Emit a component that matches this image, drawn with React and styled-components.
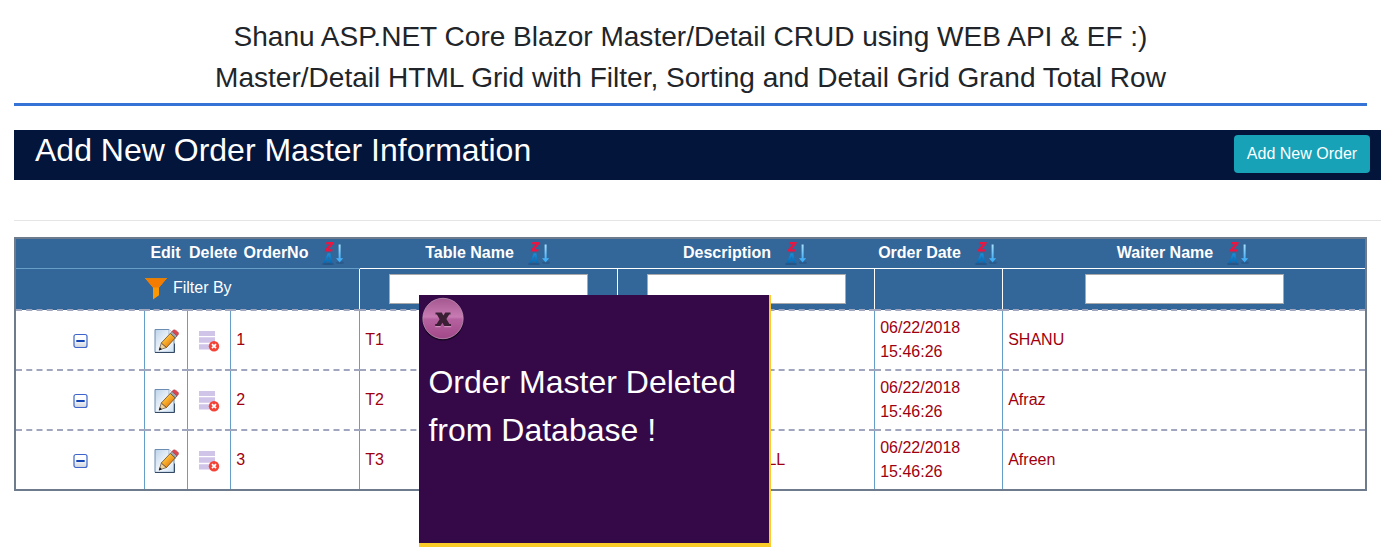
import React from 'react';
import styled, { createGlobalStyle } from 'styled-components';

const GlobalStyle = createGlobalStyle`
  *, *::before, *::after { box-sizing: border-box; }
  body {
    margin: 0;
    background: #fff;
    color: #212529;
    font: 16px/24px "Liberation Sans", Arial, sans-serif;
  }
`;

const Page = styled.main`
  position: relative;
  height: 553px;
  padding: 16px 10px 0 14px;
  overflow: hidden;
`;

const PageTitle = styled.h1`
  width: 1353px;
  height: 90px;
  margin: 0 0 24px;
  border-bottom: 3px solid #3574d6;
  font-size: 28.06px;
  line-height: 41px;
  font-weight: 400;
  text-align: center;
`;

const TitleBar = styled.header`
  display: flex;
  justify-content: space-between;
  align-items: flex-start;
  height: 50px;
  padding: 5px 11px 0 21px;
  background: #03153b;
`;

const BarTitle = styled.h2`
  margin: -4px 0 0;
  color: #fff;
  font-size: 32px;
  line-height: 38px;
  font-weight: 400;
`;

const AddButton = styled.button`
  width: 136px;
  height: 38px;
  padding: 0;
  border: 0;
  border-radius: 4px;
  background: #17a2b8;
  color: #fff;
  font: inherit;
`;

const Divider = styled.hr`
  height: 1px;
  margin: 40px 0 16px;
  border: 0;
  background: #e5e5e5;
`;

const Grid = styled.table`
  width: 1353px;
  table-layout: fixed;
  border-collapse: collapse;
  border: 2px solid #6d7b8d;
  color: #9f000f;
`;

const Col = styled.col`
  width: ${(p) => p.$w}px;
`;

const HeadCell = styled.th`
  height: 30px;
  padding: 0 0 0 ${(p) => (p.$start ? '2px' : 0)};
  border-bottom: 1px solid ${(p) => (p.$light ? '#fff' : '#659ec7')};
  background: #336699;
  color: #fff;
  white-space: nowrap;
  text-align: ${(p) => (p.$start ? 'left' : 'center')};
`;

const HeadLabel = styled.div`
  display: flex;
  justify-content: center;
  align-items: center;
  gap: 14px;
  height: 24px;
  padding-right: 1px;
`;

const FilterCell = styled.td`
  height: 42px;
  padding: 0 0 0 1px;
  border-left: 1px solid #fff;
  border-bottom: 2px dashed #a1a6bf;
  background: #336699;
  color: #fff;
`;

const FilterLabel = styled.div`
  display: flex;
  justify-content: center;
  align-items: center;
  gap: 6px;
  height: 38px;
  padding: 0 0 1px 1px;
`;

const FilterInput = styled.input`
  display: block;
  width: 199px;
  height: 30px;
  margin: 0 auto;
  border: 1px solid #a9a9a9;
  background: #fff;
  font: inherit;
`;

const Cell = styled.td`
  height: 60px;
  padding: ${(p) => (p.$icon ? '1px 0 0 1px' : '0 5px 0 5.7px')};
  border-left: 1px solid #659ec7;
  border-bottom: 2px dashed #a1a6bf;
  text-align: ${(p) => (p.$icon ? 'center' : 'left')};
  svg { display: block; margin: 0 auto; }
`;

const Description = styled.div`
  width: 162px;
  text-align: right;
`;

const Popup = styled.aside`
  position: absolute;
  left: 419px;
  top: 295px;
  width: 352px;
  height: 252px;
  padding: 2px 0 0 2px;
  border-right: 2px solid #fbcb27;
  border-bottom: 4px solid #fbcb27;
  background: #350947;
`;

const CloseButton = styled.button`
  display: block;
  width: 44px;
  height: 44px;
  padding: 0;
  border: 0;
  background: none;
`;

const Message = styled.p`
  margin: 17px 0 0 7.4px;
  color: #fff;
  font-size: 32px;
  line-height: 48px;
`;

const SortIcon = () => (
  <svg width="22" height="24" viewBox="0 0 22 24">
    <defs>
      <linearGradient id="arrow" x1="0" y1="0" x2="0" y2="1">
        <stop offset="0" stopColor="#a8e1ff" />
        <stop offset="1" stopColor="#2ea5f5" />
      </linearGradient>
      <linearGradient id="blueA" x1="0" y1="0" x2="0" y2="1">
        <stop offset="0" stopColor="#1d8ed8" />
        <stop offset="1" stopColor="#0269b4" />
      </linearGradient>
    </defs>
    <ellipse cx="6" cy="23" rx="6" ry="1.3" fill="#1c4574" opacity=".5" />
    <ellipse cx="18" cy="21.8" rx="4" ry="1.2" fill="#1c4574" opacity=".35" />
    <path d="M4.4 1h7.3l-.4 2-4.7 5.2h4l-.4 2.3H2.7l.5-2.2 4.7-5.1H4z" fill="#ea1540" />
    <path d="M5.7 12.3h2.6l2.2 10H8.1l-.4-2H4.6l-1 2H1.3zm1.2 2.9-1.5 3.4h2z" fill="url(#blueA)" />
    <path d="M16.6 3.5h2v13.8h2.6l-3.6 4.2-3.6-4.2h2.6z" fill="url(#arrow)" />
  </svg>
);

const FunnelIcon = () => (
  <svg width="22" height="23" viewBox="0 0 22 23">
    <path d="M0 1h22l-8 9.4v7.9l-6 4.2V10.4z" fill="#ff9800" />
    <path d="M0 1h22l-8 9.4H8z" fill="#f57c00" />
    <path d="M0 1h22l-1 1.3H1z" fill="#dc820c" />
  </svg>
);

const CollapseIcon = () => (
  <svg width="15" height="16" viewBox="0 0 15 16">
    <defs>
      <linearGradient id="box" x1="0" y1="0" x2="0" y2="1">
        <stop offset=".35" stopColor="#fff" />
        <stop offset="1" stopColor="#ccd2dc" />
      </linearGradient>
    </defs>
    <rect x="1" y="1.5" width="13" height="13" rx="2" fill="url(#box)" stroke="#3e64cb" strokeWidth="1.2" />
    <path d="M3.3 8h8.4" stroke="#1546b8" strokeWidth="2" />
  </svg>
);

const EditIcon = () => (
  <svg width="25" height="26" viewBox="0 0 25 26">
    <defs>
      <linearGradient id="sheet" x1="0" y1="0" x2="1" y2="1">
        <stop offset="0" stopColor="#bdd3ea" />
        <stop offset=".6" stopColor="#f5f9fd" />
        <stop offset="1" stopColor="#c9dff1" />
      </linearGradient>
      <linearGradient id="wood" x1="0" y1="0" x2="1" y2="1">
        <stop offset=".3" stopColor="#ffc23a" />
        <stop offset=".75" stopColor="#e77f0c" />
      </linearGradient>
    </defs>
    <path d="M1 1.5h14l5 5v17.8H1z" fill="url(#sheet)" stroke="#6d8cb2" />
    <path d="M15 1.5v5h5" fill="#fff" stroke="#9eb5cd" />
    <path d="M1 24.5h19.5v-9" fill="none" stroke="#344a65" />
    <path d="m5.2 22 2.1-7 5.2 4.5z" fill="#efd19b" stroke="#5c4935" strokeWidth=".7" />
    <path d="m4.8 22.5 1-3.2 2.1 1.9z" fill="#171717" />
    <path d="m7.3 15 9-9.6 5 4.5-8.8 9.6z" fill="url(#wood)" stroke="#704919" strokeWidth=".8" />
    <path d="m16.3 5.4 1.8-2 5 4.4-1.8 2.1z" fill="#a5aaaf" stroke="#4d5558" strokeWidth=".7" />
    <path d="m18.1 3.4.8-1q1.2-1 2.5-.2l2.6 2.1q1 1.1.2 2.3l-1.1 1.2z" fill="#df4550" stroke="#a84049" strokeWidth=".6" />
  </svg>
);

const DeleteIcon = () => (
  <svg width="22" height="24" viewBox="0 0 22 24">
    <path d="M1 2h16v5H1zM1 8.3h16v5.5H1zM1 15.2h16v5.3H1z" fill="#d1c4e9" />
    <circle cx="16" cy="17.2" r="5.2" fill="#f44336" />
    <path d="m14 15.2 4 4m0-4-4 4" stroke="#fff" strokeWidth="1.7" />
  </svg>
);

const CloseIcon = () => (
  <svg width="44" height="44" viewBox="0 0 44 44">
    <defs>
      <linearGradient id="ball" x1="0" y1="0" x2="0" y2="1">
        <stop offset="0" stopColor="#a5588f" />
        <stop offset=".46" stopColor="#c87bb3" />
        <stop offset=".52" stopColor="#b561a0" />
        <stop offset="1" stopColor="#a24888" />
      </linearGradient>
    </defs>
    <circle cx="22" cy="22.7" r="20.8" fill="#160620" />
    <circle cx="22" cy="21.5" r="20.2" fill="url(#ball)" stroke="#bd91b5" strokeWidth=".8" />
    <path d="M14.5 15.5h6.3l1.6 3.1 1.9-3.1h5.2v2h-1.3l-2.8 4.6 3 5h1.6v2h-6.7l-1.9-3.4-2 3.4h-5.2v-2h1.4l3-4.9-2.7-4.7h-1.4z" fill="#3b2035" />
    <path d="M14.3 29.7h5.3m3.6 0h7" stroke="#d69ac7" />
  </svg>
);

const columns = [129, 43, 43, 129, 258, 257, 128, 364];
const sortable = ['OrderNo', 'Table Name', 'Description', 'Order Date', 'Waiter Name'];
const orders = [
  { no: 1, table: 'T1', description: '', waiter: 'SHANU' },
  { no: 2, table: 'T2', description: '', waiter: 'Afraz' },
  { no: 3, table: 'T3', description: 'ALL', waiter: 'Afreen' },
];

export default function App() {
  return (
    <Page>
      <GlobalStyle />
      <PageTitle>
        Shanu ASP.NET Core Blazor Master/Detail CRUD using WEB API &amp; EF :)
        <br />
        Master/Detail HTML Grid with Filter, Sorting and Detail Grid Grand Total Row
      </PageTitle>
      <TitleBar>
        <BarTitle>Add New Order Master Information</BarTitle>
        <AddButton>Add New Order</AddButton>
      </TitleBar>
      <Divider />
      <Grid>
        <colgroup>
          {columns.map((w, i) => <Col key={i} $w={w} />)}
        </colgroup>
        <thead>
          <tr>
            <HeadCell />
            <HeadCell>Edit</HeadCell>
            <HeadCell $start>Delete</HeadCell>
            {sortable.map((label, i) => (
              <HeadCell key={label} $light={i > 0}>
                <HeadLabel>{label}<SortIcon /></HeadLabel>
              </HeadCell>
            ))}
          </tr>
        </thead>
        <tbody>
          <tr>
            <FilterCell colSpan={4}>
              <FilterLabel><FunnelIcon />Filter By</FilterLabel>
            </FilterCell>
            <FilterCell><FilterInput /></FilterCell>
            <FilterCell><FilterInput /></FilterCell>
            <FilterCell />
            <FilterCell><FilterInput /></FilterCell>
          </tr>
          {orders.map((o) => (
            <tr key={o.no}>
              <Cell $icon><CollapseIcon /></Cell>
              <Cell $icon><EditIcon /></Cell>
              <Cell $icon><DeleteIcon /></Cell>
              <Cell>{o.no}</Cell>
              <Cell>{o.table}</Cell>
              <Cell><Description>{o.description}</Description></Cell>
              <Cell>06/22/2018 15:46:26</Cell>
              <Cell>{o.waiter}</Cell>
            </tr>
          ))}
        </tbody>
      </Grid>
      <Popup>
        <CloseButton aria-label="Close"><CloseIcon /></CloseButton>
        <Message>Order Master Deleted<br />from Database !</Message>
      </Popup>
    </Page>
  );
}
